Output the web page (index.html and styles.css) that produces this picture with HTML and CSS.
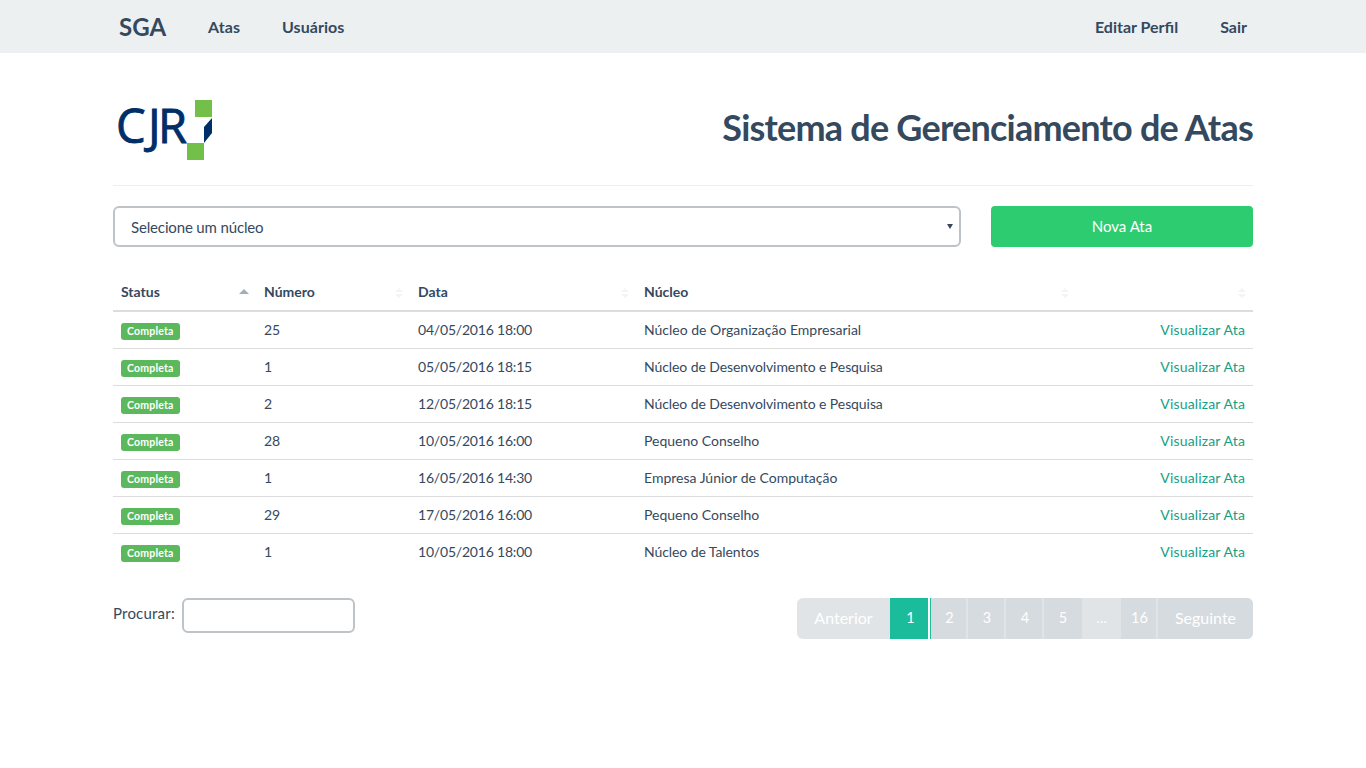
FILE: index.html
```html
<!DOCTYPE html>
<html lang="pt-BR">
<head>
<meta charset="utf-8">
<title>SGA</title>
<link rel="stylesheet" href="styles.css">
</head>
<body>
<nav class="navbar">
  <div class="nav-inner">
    <div class="nav-group nav-left">
      <a class="brand" href="#">SGA</a>
      <a class="nav-link" href="#">Atas</a>
      <a class="nav-link" href="#">Usuários</a>
    </div>
    <div class="nav-group nav-right">
      <a class="nav-link" href="#">Editar Perfil</a>
      <a class="nav-link" href="#">Sair</a>
    </div>
  </div>
</nav>
<main class="container">
  <header class="page-header">
    <svg class="logo" width="96" height="60" viewBox="0 0 96 60" aria-label="CJR">
      <text class="logo-text" x="-1 31 41" y="43">CJR</text>
      <rect class="logo-green" x="78" y="0" width="17" height="17"/>
      <rect class="logo-green" x="70" y="43" width="17" height="17"/>
      <path class="logo-blue" d="M95 18 L95 33 L87 43 L87 27 Z"/>
    </svg>
    <h1 class="title">Sistema de Gerenciamento de Atas</h1>
  </header>
  <div class="controls">
    <div class="select-wrap">
      <select class="nucleo-select">
        <option>Selecione um núcleo</option>
      </select>
    </div>
    <a class="btn-new" href="#">Nova Ata</a>
  </div>
  <table class="atas">
    <colgroup>
      <col class="c-status"><col class="c-num"><col class="c-date"><col class="c-nucleo"><col class="c-act">
    </colgroup>
    <thead>
      <tr>
        <th class="sort-asc">Status</th>
        <th class="sort">Número</th>
        <th class="sort">Data</th>
        <th class="sort">Núcleo</th>
        <th class="sort"></th>
      </tr>
    </thead>
    <tbody>
      <tr><td><span class="badge">Completa</span></td><td>25</td><td class="date">04/05/2016 18:00</td><td>Núcleo de Organização Empresarial</td><td class="act"><a href="#">Visualizar Ata</a></td></tr>
      <tr><td><span class="badge">Completa</span></td><td>1</td><td class="date">05/05/2016 18:15</td><td class="nuc-tight">Núcleo de Desenvolvimento e Pesquisa</td><td class="act"><a href="#">Visualizar Ata</a></td></tr>
      <tr><td><span class="badge">Completa</span></td><td>2</td><td class="date">12/05/2016 18:15</td><td class="nuc-tight">Núcleo de Desenvolvimento e Pesquisa</td><td class="act"><a href="#">Visualizar Ata</a></td></tr>
      <tr><td><span class="badge">Completa</span></td><td>28</td><td class="date">10/05/2016 16:00</td><td>Pequeno Conselho</td><td class="act"><a href="#">Visualizar Ata</a></td></tr>
      <tr><td><span class="badge">Completa</span></td><td>1</td><td class="date">16/05/2016 14:30</td><td>Empresa Júnior de Computação</td><td class="act"><a href="#">Visualizar Ata</a></td></tr>
      <tr><td><span class="badge">Completa</span></td><td>29</td><td class="date">17/05/2016 16:00</td><td>Pequeno Conselho</td><td class="act"><a href="#">Visualizar Ata</a></td></tr>
      <tr><td><span class="badge">Completa</span></td><td>1</td><td class="date">10/05/2016 18:00</td><td class="nuc-tight">Núcleo de Talentos</td><td class="act"><a href="#">Visualizar Ata</a></td></tr>
    </tbody>
  </table>
  <div class="table-footer">
    <label class="search">Procurar: <input class="search-input" type="search"></label>
    <ul class="pagination">
      <li class="pg pg-first">Anterior</li>
      <li class="pg pg-active">1</li>
      <li class="pg pg-num pg-narrow">2</li>
      <li class="pg pg-num">3</li>
      <li class="pg pg-num">4</li>
      <li class="pg pg-num pg-wide">5</li>
      <li class="pg pg-ellipsis">…</li>
      <li class="pg pg-num pg-narrow">16</li>
      <li class="pg pg-last">Seguinte</li>
    </ul>
  </div>
</main>
</body>
</html>
```
FILE: styles.css
```css
* { box-sizing: border-box; }
html, body { margin: 0; padding: 0; }
body {
  font-family: Lato, "Liberation Sans", sans-serif;
  font-size: 14px;
  line-height: 20px;
  color: #34495e;
  background: #fff;
}
a { text-decoration: none; color: inherit; }

.navbar { height: 53px; background: #ecf0f1; }
.nav-inner {
  width: 1140px;
  height: 53px;
  margin: 0 auto;
  padding-top: 1px;
  display: flex;
  justify-content: space-between;
  align-items: center;
}
.nav-group { display: flex; align-items: center; }
.brand {
  font-size: 24px;
  font-weight: 700;
  letter-spacing: 0;
  padding: 0 21px 0 6px;
}
.nav-link {
  font-size: 16px;
  font-weight: 700;
  padding: 0 21px;
}
.nav-left .nav-link { letter-spacing: 0.05px; }
.nav-right .nav-link:last-child { padding-right: 6px; }

.container { width: 1140px; margin: 0 auto; }
.page-header {
  height: 133px;
  padding-top: 47px;
  border-bottom: 1px solid #eee;
  display: flex;
  justify-content: space-between;
  align-items: flex-start;
}
.logo { margin-left: 4px; display: block; overflow: visible; }
.logo-text {
  font-family: "Open Sans", Lato, sans-serif;
  font-size: 47px;
  fill: #002e66;
  stroke: #002e66;
  stroke-width: 0.9px;
}
.logo-green { fill: #72bf4a; }
.logo-blue { fill: #002e66; }
.title {
  margin: 3px 0 0;
  font-size: 36px;
  font-weight: 700;
  line-height: 48px;
  letter-spacing: -0.78px;
}

.controls {
  display: flex;
  justify-content: space-between;
  align-items: center;
  margin-top: 20px;
}
.select-wrap {
  position: relative;
  width: 848px;
  height: 41px;
}
.select-wrap::after {
  content: "";
  position: absolute;
  right: 8px;
  top: 18px;
  border-left: 3px solid transparent;
  border-right: 3px solid transparent;
  border-top: 5px solid #34495e;
}
.nucleo-select {
  display: block;
  width: 848px;
  height: 41px;
  border: 2px solid #bdc3c7;
  border-radius: 6px;
  padding: 0 16px;
  background: #fff;
  font: 15px Lato, sans-serif;
  letter-spacing: -0.15px;
  color: #34495e;
  appearance: none;
  -webkit-appearance: none;
}
.btn-new {
  width: 262px;
  height: 41px;
  border-radius: 4px;
  background: #2ecc71;
  color: #fff;
  font-size: 15px;
  line-height: 41px;
  text-align: center;
}

.atas {
  width: 1140px;
  margin-top: 26px;
  border-collapse: collapse;
  table-layout: fixed;
}
.c-status { width: 143px; }
.c-num { width: 154px; }
.c-date { width: 226px; }
.c-nucleo { width: 440px; }
.c-act { width: 177px; }
.atas th {
  position: relative;
  height: 38px;
  padding: 1px 8px 0;
  text-align: left;
  font-weight: 700;
  border-bottom: 2px solid #ddd;
}
.atas td {
  height: 37px;
  padding: 1px 8px 0;
  border-top: 1px solid #ddd;
}
.atas tbody tr:first-child td { border-top: 0; }
.sort::before, .sort::after, .sort-asc::after {
  content: "";
  position: absolute;
  right: 7px;
  width: 0;
  height: 0;
  border-left: 4px solid transparent;
  border-right: 4px solid transparent;
}
.sort::before { top: 15px; border-bottom: 4px solid #f2f4f5; }
.sort::after { top: 21px; border-top: 4px solid #f2f4f5; }
.sort-asc::after { top: 16px; border-left-width: 5px; border-right-width: 5px; border-bottom: 5px solid #a3adb8; }
.date { letter-spacing: -0.2px; }
.nuc-tight { letter-spacing: -0.08px; }
.badge {
  display: inline-block;
  padding: 0 6px;
  height: 17px;
  background: #5cb85c;
  border-radius: 3px;
  color: #fff;
  font-size: 10.5px;
  font-weight: 700;
  line-height: 17px;
  letter-spacing: 0.2px;
  vertical-align: middle;
}
.act { text-align: right; }
.act a { color: #16a085; letter-spacing: 0.15px; }

.table-footer {
  display: flex;
  justify-content: space-between;
  align-items: flex-start;
  margin-top: 28px;
}
.search {
  display: flex;
  align-items: flex-start;
  font-size: 15px;
  letter-spacing: 0.2px;
  line-height: 30px;
}
.search-input {
  width: 173px;
  height: 35px;
  margin-left: 7px;
  border: 2px solid #bdc3c7;
  border-radius: 6px;
  background: #fff;
  outline: 0;
}
.pagination {
  display: flex;
  margin: 0;
  padding: 0;
  list-style: none;
  height: 41px;
  width: 456px;
  background: #e1e4e7;
  border-radius: 6px;
}
.pg {
  height: 41px;
  line-height: 40px;
  text-align: center;
  color: #fff;
  font-size: 16px;
}
.pg-num { width: 36px; margin-right: 2px; padding-left: 2px; font-size: 14.5px; background: #d6dbdf; }
.pg-narrow { width: 35px; }
.pg-wide { width: 38px; margin-right: 0; padding-left: 0; }
.pg-first { width: 93px; }
.pg-active {
  width: 41px;
  background: linear-gradient(to right, #1abc9c 38px, #fff 38px, #fff 40px, #1abc9c 40px);
  font-size: 14.5px;
}
.pg-ellipsis { width: 39px; font-size: 14px; }
.pg-last { width: 95px; background: #d6dbdf; border-radius: 0 6px 6px 0; }
```
